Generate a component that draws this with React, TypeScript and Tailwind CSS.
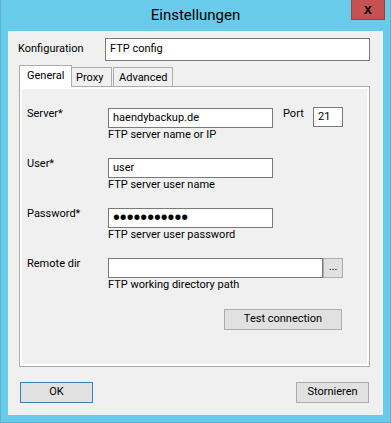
import React from "react";

const font = { fontFamily: "Roboto, 'Liberation Sans', sans-serif" };

function Field({ w, children, className = "" }: { w: string; children?: React.ReactNode; className?: string }) {
  return (
    <div className={`h-[20px] border border-[#7a7a7a] bg-white flex items-center pl-[4px] text-[11px] text-black ${w} ${className}`}>
      {children}
    </div>
  );
}

function Row({ label, children, helper }: { label: string; children: React.ReactNode; helper: string }) {
  return (
    <div className="flex h-[50px]">
      <div className="w-[86px] pl-[5px] -mt-[1px] text-[11px] leading-[14px] text-black">{label}</div>
      <div className="flex flex-col">
        {children}
        <div className="text-[11px] leading-[13px] text-black">{helper}</div>
      </div>
    </div>
  );
}

export default function App() {
  return (
    <div style={font} className="w-[391px] h-[423px] bg-[#68cbe9] flex flex-col border-x border-b border-[#5cb3d2]">
      {/* title bar */}
      <div className="h-[31px] grid grid-cols-[1fr_auto_1fr]">
        <div />
        <div className="pt-[5px] text-[15px] leading-[20px] text-black">Einstellungen</div>
        <div className="flex justify-end pr-[5px]">
          <div className="w-[34px] h-[20px] bg-[#c75050] border-x border-b border-[#a23d3d] flex items-center justify-center text-black font-bold text-[14px] leading-none pb-[2px]" style={{ fontFamily: "'Liberation Sans', sans-serif" }}>
            x
          </div>
        </div>
      </div>

      {/* client area */}
      <div className="mx-[7px] h-[384px] bg-[#f0f0f0] flex flex-col">
        {/* Konfiguration */}
        <div className="flex items-center mt-[7px]">
          <div className="w-[97px] pl-[10px] text-[11px] text-black">Konfiguration</div>
          <div className="w-[265px] h-[23px] border border-[#7a7a7a] bg-white flex items-center pl-[4px] text-[11px] text-black">
            FTP config
          </div>
        </div>

        {/* tabs */}
        <div className="flex items-end ml-[11px] mt-[4px] h-[21px]">
          <div className="relative z-10 -mb-px h-[22px] w-[53px] border border-b-0 border-[#acacac] bg-white pl-[7px] text-[11px] leading-[20px] text-black">
            General
          </div>
          <div className="h-[19px] w-[40px] border-r border-t border-[#acacac] bg-[#f0f0f0] pl-[4px] text-[11px] leading-[19px] text-black">
            Proxy
          </div>
          <div className="h-[19px] w-[60px] ml-[1px] border border-b-0 border-[#acacac] bg-[#f0f0f0] pl-[5px] text-[11px] leading-[19px] text-black">
            Advanced
          </div>
        </div>

        {/* panel */}
        <div className="ml-[11px] w-[351px] h-[281px] border border-[#acacac] bg-white p-[2px] flex">
          <div className="flex-1 bg-[#f0f0f0] pt-[19px] flex flex-col">
            <Row label="Server*" helper="FTP server name or IP">
              <div className="flex items-start">
                <Field w="w-[165px]">haendybackup.de</Field>
                <div className="w-[40px] pl-[10px] -mt-[1px] text-[11px] leading-[14px] text-black">Port</div>
                <Field w="w-[30px]" className="-mt-px">21</Field>
              </div>
            </Row>
            <Row label="User*" helper="FTP server user name">
              <Field w="w-[165px]">user</Field>
            </Row>
            <Row label="Password*" helper="FTP server user password">
              <Field w="w-[165px]">
                <span className="text-[19.5px] leading-none text-black" style={{ fontFamily: "'Liberation Sans', Arial, sans-serif" }}>
                  •••••••••••
                </span>
              </Field>
            </Row>
            <Row label="Remote dir" helper="FTP working directory path">
              <div className="flex">
                <Field w="w-[215px]" />
                <div className="w-[20px] h-[20px] border border-[#adadad] bg-[#e1e1e1] flex items-center justify-center text-[11px] leading-none pb-[3px] text-black">
                  ...
                </div>
              </div>
            </Row>
            <div className="mt-[1px] ml-[202px] w-[118px] h-[21px] border border-[#adadad] bg-[#e1e1e1] flex items-center justify-center text-[11px] text-black">
              Test connection
            </div>
          </div>
        </div>

        {/* footer */}
        <div className="flex justify-between mt-[15px] pl-[12px] pr-[14px]">
          <div className="w-[73px] h-[21px] border border-[#3c7fb1] bg-[#e1e1e1] flex items-center justify-center text-[11px] text-black">
            OK
          </div>
          <div className="w-[73px] h-[21px] border border-[#adadad] bg-[#e1e1e1] flex items-center justify-center text-[11px] text-black">
            Stornieren
          </div>
        </div>
      </div>
    </div>
  );
}
